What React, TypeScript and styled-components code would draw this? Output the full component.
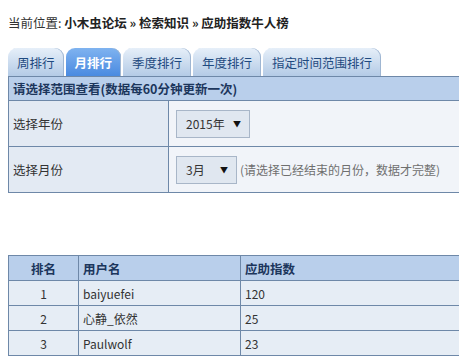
import styled, { createGlobalStyle } from "styled-components";

const GlobalStyle = createGlobalStyle`
  html, body {
    margin: 0;
    padding: 0;
    overflow: hidden;
    background: #ffffff;
  }
  body {
    padding: 0 8px;
    font-family: "Noto Sans CJK SC", "DejaVu Sans", sans-serif;
    font-size: 12px;
    color: #333;
  }
`;

const tabs = ["周排行", "月排行", "季度排行", "年度排行", "指定时间范围排行"];

const rows = [
  { rank: 1, name: "baiyuefei", score: 120 },
  { rank: 2, name: "心静_依然", score: 25 },
  { rank: 3, name: "Paulwolf", score: 23 },
];

const App = () => {
  return (
    <Page>
      <GlobalStyle />
      <Breadcrumb>
        当前位置: <strong>小木虫论坛 » 检索知识 » 应助指数牛人榜</strong>
      </Breadcrumb>
      <TabBar>
        {tabs.map((t, i) => (
          <Tab key={t} $active={i === 1}>
            {t}
          </Tab>
        ))}
      </TabBar>
      <Panel>
        <PanelHead>请选择范围查看(数据每60分钟更新一次)</PanelHead>
        <FormRow>
          <Label>选择年份</Label>
          <Field>
            <Select $width={74}>
              2015年<Arrow>▼</Arrow>
            </Select>
          </Field>
        </FormRow>
        <FormRow>
          <Label>选择月份</Label>
          <Field>
            <Select $width={61}>
              3月<Arrow>▼</Arrow>
            </Select>
            <Hint>(请选择已经结束的月份，数据才完整)</Hint>
          </Field>
        </FormRow>
      </Panel>
      <Table>
        <colgroup>
          <col style={{ width: 70 }} />
          <col style={{ width: 162 }} />
          <col />
        </colgroup>
        <thead>
          <tr>
            <Th $center>排名</Th>
            <Th>用户名</Th>
            <Th>应助指数</Th>
          </tr>
        </thead>
        <tbody>
          {rows.map((r) => (
            <tr key={r.rank}>
              <Td $center>{r.rank}</Td>
              <Td>{r.name}</Td>
              <Td>{r.score}</Td>
            </tr>
          ))}
        </tbody>
      </Table>
    </Page>
  );
};

const Page = styled.div`
  width: 620px;
`;

const Breadcrumb = styled.div`
  padding-top: 13px;
  line-height: 20px;
  font-size: 12.5px;
  color: #333;

  & strong {
    color: #222;
  }
`;

const TabBar = styled.div`
  display: flex;
  gap: 2px;
  margin-top: 15px;
  height: 28px;
`;

const Tab = styled.div<{ $active?: boolean }>`
  height: 28px;
  line-height: 29px;
  padding: 0 9px;
  border-radius: 9px 9px 0 0;
  font-size: 12.5px;
  font-weight: ${(p) => (p.$active ? "bold" : "normal")};
  color: ${(p) => (p.$active ? "#ffffff" : "#1f4a80")};
  background: ${(p) =>
    p.$active
      ? "linear-gradient(#7fb3f0, #4a8ae0)"
      : "linear-gradient(#e6eff9, #b4cbe6)"};
  box-shadow: inset -1px 0 0 #9fb6d2;
`;

const Panel = styled.div`
  border-top: 1px solid #6e88a8;
  border-left: 1px solid #6e88a8;
`;

const PanelHead = styled.div`
  height: 23px;
  line-height: 23px;
  padding-left: 4px;
  background: #b9cfeb;
  color: #1c365c;
  font-weight: bold;
  font-size: 12.5px;
  border-bottom: 1px solid #6e88a8;
`;

const FormRow = styled.div`
  display: grid;
  grid-template-columns: 160px 1fr;
  height: 45px;
  border-bottom: 1px solid #6e88a8;
`;

const Label = styled.div`
  display: flex;
  align-items: center;
  padding-left: 4px;
  font-size: 12.5px;
  background: #e3eaf3;
  border-right: 1px solid #6e88a8;
`;

const Field = styled.div`
  display: flex;
  align-items: center;
  padding-left: 7px;
  background: #f1f4f9;
`;

const Select = styled.div<{ $width: number }>`
  box-sizing: border-box;
  width: ${(p) => p.$width}px;
  height: 28px;
  display: flex;
  align-items: center;
  justify-content: space-between;
  padding: 0 8px 0 9px;
  background: #e0e7f0;
  border: 1px solid #a8b6c8;
  color: #333;
`;

const Arrow = styled.span`
  font-size: 8px;
  color: #111;
`;

const Hint = styled.span`
  margin-left: 3px;
  color: #6f6f6f;
`;

const Table = styled.table`
  margin-top: 62px;
  width: 100%;
  table-layout: fixed;
  border-collapse: collapse;
  border: 1px solid #6e88a8;
`;

const Th = styled.th<{ $center?: boolean }>`
  height: 24px;
  padding: 0 4px;
  background: #b9cfeb;
  color: #1c365c;
  font-weight: bold;
  font-size: 12.5px;
  text-align: ${(p) => (p.$center ? "center" : "left")};
  border: 1px solid #6e88a8;
`;

const Td = styled.td<{ $center?: boolean }>`
  height: 24px;
  padding: 0 4px;
  background: #e6edf5;
  color: #333;
  text-align: ${(p) => (p.$center ? "center" : "left")};
  border: 1px solid #6e88a8;
`;

export default App;
